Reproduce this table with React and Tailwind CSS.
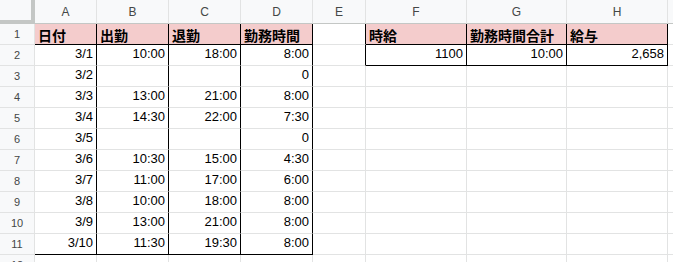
const cols = ["A", "B", "C", "D", "E", "F", "G", "H", ""];

const rows = [
  ["日付", "出勤", "退勤", "勤務時間", "", "時給", "勤務時間合計", "給与"],
  ["3/1", "10:00", "18:00", "8:00", "", "1100", "10:00", "2,658"],
  ["3/2", "", "", "0"],
  ["3/3", "13:00", "21:00", "8:00"],
  ["3/4", "14:30", "22:00", "7:30"],
  ["3/5", "", "", "0"],
  ["3/6", "10:30", "15:00", "4:30"],
  ["3/7", "11:00", "17:00", "6:00"],
  ["3/8", "10:00", "18:00", "8:00"],
  ["3/9", "13:00", "21:00", "8:00"],
  ["3/10", "11:30", "19:30", "8:00"],
  [],
];

// which cells get black borders (right / bottom)
function cellBorder(r, c) {
  let right = "border-r-[#e2e3e3]";
  let bottom = "border-b-[#e2e3e3]";
  if (c <= 3 && r <= 10) right = "border-r-black";
  if (c <= 3 && (r === 0 || r === 10)) bottom = "border-b-black";
  if (c === 4 && r <= 1) right = "border-r-black";
  if (c >= 5 && c <= 7 && r <= 1) {
    right = "border-r-black";
    bottom = "border-b-black";
  }
  return `${right} ${bottom}`;
}

export default function App() {
  return (
    <div className="w-[673px] h-[262px] overflow-hidden bg-white font-['Liberation_Sans','Noto_Sans_CJK_JP',sans-serif] text-[13px] text-black">
      <div className="grid grid-cols-[35px_62px_72px_72px_72px_53px_101px_100px_101px_40px] grid-rows-[24px_repeat(12,21px)]">
        <div className="bg-[#f8f9fa] border-r-4 border-b-4 border-[#c4c7c5]" />
        {cols.map((c, i) => (
          <div
            key={c + i}
            className="bg-[#f8f9fa] border-r border-b border-r-[#e2e3e3] border-b-[#c4c7c5] flex items-center justify-center text-[12px] text-[#444746]"
          >
            {c}
          </div>
        ))}
        {rows.map((row, r) => (
          <div key={r} className="contents">
            <div className="bg-[#f8f9fa] border-r border-b border-[#e2e3e3] flex items-center justify-center text-[11px] text-[#444746]">
              {r + 1}
            </div>
            {Array.from({ length: 9 }).map((_, c) => {
              const v = row[c] || "";
              const head = r === 0 && v !== "";
              return (
                <div
                  key={c}
                  className={`border-r border-b ${cellBorder(r, c)} flex px-[3px] whitespace-nowrap ${
                    head
                      ? "bg-[#f4cccc] font-bold justify-start items-center pt-[4px] leading-none text-[14px]"
                      : "justify-end items-end pb-[2px]"
                  }`}
                >
                  {v}
                </div>
              );
            })}
          </div>
        ))}
      </div>
    </div>
  );
}
